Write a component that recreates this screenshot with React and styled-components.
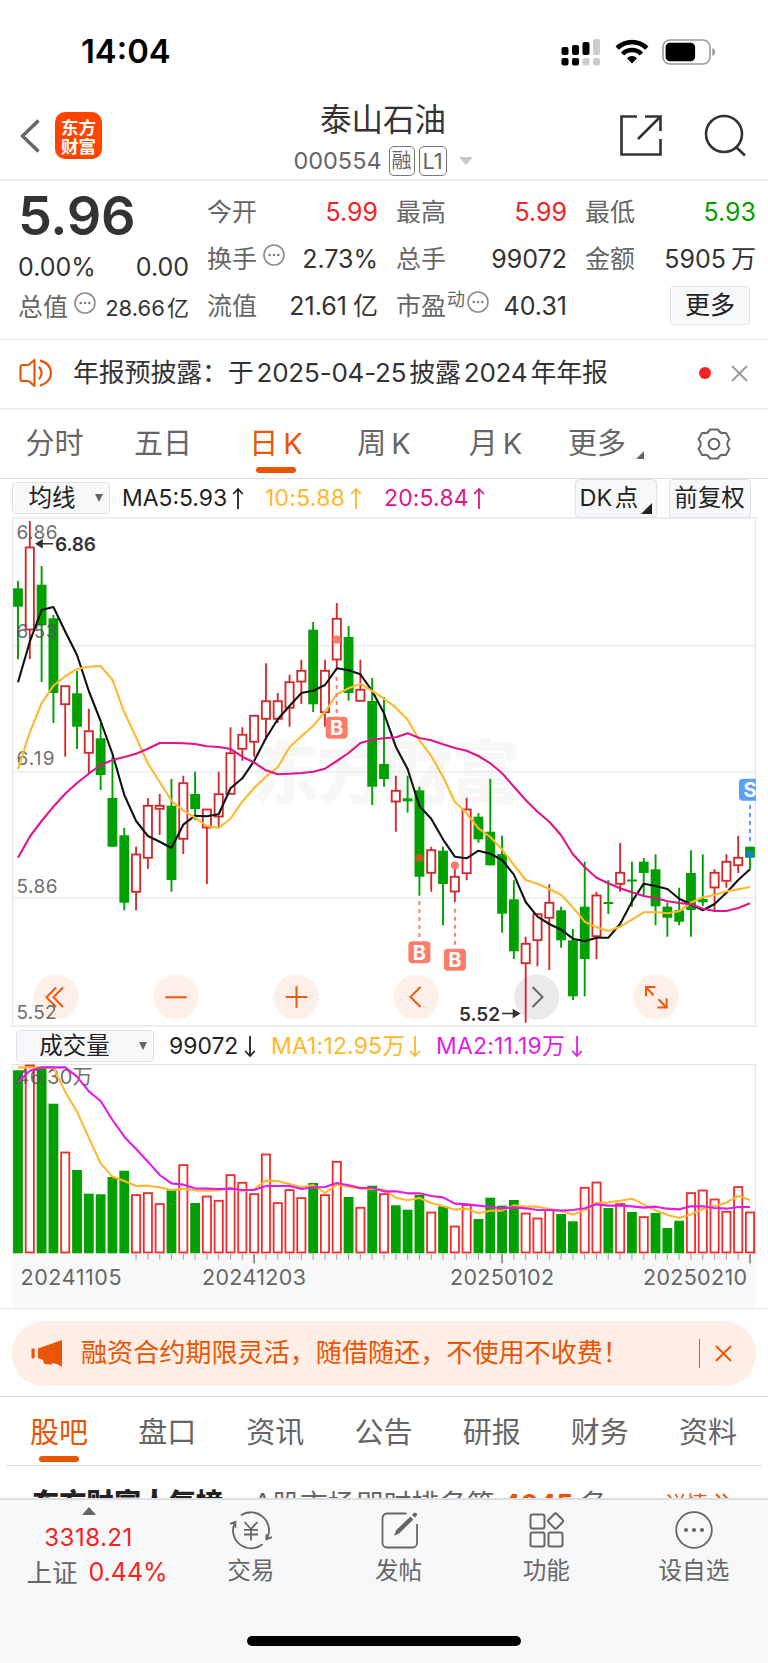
import React from "react";
import styled, { createGlobalStyle } from "styled-components";

const FONT = `Inter, "Noto Sans CJK SC", "Liberation Sans", sans-serif`;

const C = {
  orange: "#ea5504",
  red: "#f62222",
  green: "#00a000",
  text: "#333",
  sub: "#666",
  line: "#e6e6e8",
  panel: "#f7f8fa",
  black: "#111",
  yellow: "#ffb72c",
  pink: "#e0148c",
  purple: "#e21be6",
};

const GlobalStyle = createGlobalStyle`
  body { margin: 0; background: #fff; }
  * { box-sizing: border-box; }
`;

const Screen = styled.main`
  width: 768px;
  height: 1663px;
  overflow: hidden;
  display: flex;
  flex-direction: column;
  background: #fff;
  color: ${C.text};
  font-family: ${FONT};
  font-weight: 400;
  white-space: nowrap;
`;

const Text = styled.span`
  font-size: ${(p) => p.$size || 25}px;
  font-weight: ${(p) => p.$weight || 400};
  letter-spacing: ${(p) => p.$ls || 0}px;
  word-spacing: ${(p) => p.$ws || 0}px;
  color: ${(p) => p.$color || "inherit"};
  line-height: 1;
`;

/* ---------- status bar ---------- */

const StatusBar = styled.div`
  height: 90px;
  padding: 13px 52px 0 81px;
  display: flex;
  align-items: center;
  justify-content: space-between;
  color: #000;
`;

const StatusIcons = styled.div`
  display: flex;
  align-items: center;
  gap: 13.5px;
`;

/* ---------- title bar ---------- */

const TitleBar = styled.header`
  height: 91px;
  padding: 0 21px 0 19px;
  display: grid;
  grid-template-columns: 240px 1fr 240px;
  border-bottom: 2px solid #ececee;
`;

const TitleSide = styled.div`
  display: flex;
  align-items: center;
  padding-top: ${(p) => (p.$end ? 3 : 2)}px;
  gap: ${(p) => p.$gap}px;
  justify-content: ${(p) => (p.$end ? "flex-end" : "flex-start")};
`;

const Logo = styled.div`
  width: 47px;
  height: 47px;
  border-radius: 10px;
  background: #ff4400;
  color: #fff;
  display: flex;
  flex-direction: column;
  align-items: center;
  justify-content: center;
  font: 700 17.5px/19px "Noto Sans CJK SC", sans-serif;
`;

const TitleCenter = styled.div`
  display: flex;
  flex-direction: column;
  align-items: center;
  padding-top: 10px;
`;

const StockName = styled.h1`
  margin: 0;
  font-size: 31.5px;
  font-weight: 400;
  line-height: 40px;
`;

const CodeLine = styled.div`
  height: 32px;
  margin-top: 5px;
  display: flex;
  align-items: center;
  gap: 4px;
  color: ${C.sub};
`;

const Badge = styled.span`
  width: ${(p) => p.$w}px;
  height: 30px;
  margin-left: ${(p) => p.$ml || 0}px;
  border: 1.5px solid #777;
  border-radius: 5px;
  display: inline-flex;
  align-items: center;
  justify-content: center;
  font-size: ${(p) => p.$size}px;
  line-height: 1;
`;

const Caret = styled.span`
  width: 0;
  height: 0;
  border: ${(p) => p.$s}px solid transparent;
  border-top: ${(p) => p.$h}px solid ${(p) => p.$color};
  border-bottom: 0;
  margin-left: ${(p) => p.$ml || 0}px;
`;

/* ---------- quote ---------- */

const Quote = styled.section`
  height: 159px;
  padding: 8px 0 0 18px;
  display: grid;
  grid-template-columns: repeat(4, 171px);
  column-gap: 18px;
  border-bottom: 1px solid ${C.line};
`;

const QuoteColumn = styled.div`
  display: flex;
  flex-direction: column;
`;

const QuoteRow = styled.div`
  height: ${(p) => p.$h || 47}px;
  display: flex;
  align-items: center;
  justify-content: ${(p) => (p.$end ? "flex-end" : "space-between")};
`;

const QuoteLabel = styled.span`
  display: inline-flex;
  align-items: center;
  font-size: 25px;
  line-height: 1;
  color: ${C.sub};
  sup {
    font-size: 18px;
    line-height: 1;
    margin: -14px 0 0 1px;
  }
  svg {
    margin: -9px 0 0 ${(p) => (p.$tight ? 2 : 6)}px;
  }
`;

const Price = styled.div`
  height: 55px;
  font-size: 54px;
  font-weight: 600;
  line-height: 54px;
  letter-spacing: -0.3px;
`;

const MoreButton = styled.button`
  width: 80px;
  height: 39px;
  margin: -2px 6px 0 0;
  padding: 0;
  border: 1.5px solid #dfe1e8;
  border-radius: 4px;
  background: ${C.panel};
  color: #222;
  font: 400 25px/1 ${FONT};
`;

/* ---------- notice ---------- */

const Notice = styled.section`
  height: 70px;
  padding: 0 20px 2px 19px;
  display: flex;
  align-items: center;
  border-bottom: 2px solid #eeeef0;
`;

const NoticeText = styled.div`
  flex: 1;
  padding-left: 20px;
  font-size: 26px;
  letter-spacing: -0.2px;
  word-spacing: -4.2px;
  line-height: 1;
`;

const RedDot = styled.span`
  width: 12px;
  height: 12px;
  border-radius: 50%;
  background: ${C.red};
  margin-right: 20px;
`;

/* ---------- tabs ---------- */

const PeriodTabs = styled.nav`
  height: 69px;
  display: grid;
  grid-template-columns: 109px 108px 118px 98px 125px 123px 1fr;
  border-bottom: 1.5px solid #dddee3;
`;

const SectionTabs = styled.nav`
  height: 69px;
  margin: 0 6px;
  padding: 0 25px 0 24px;
  display: flex;
  justify-content: space-between;
  border-bottom: 1px solid #dedee0;
`;

const Tab = styled.div`
  display: flex;
  flex-direction: column;
  align-items: center;
  padding-top: ${(p) => p.$top || 19}px;
  font-size: 29px;
  line-height: 30px;
  word-spacing: -3px;
  color: ${(p) => (p.$active ? C.orange : C.sub)};
  &::after {
    content: "";
    width: 39.5px;
    height: 6px;
    margin-top: 8px;
    border-radius: 3px;
    background: ${(p) => (p.$active ? C.orange : "transparent")};
  }
`;

const MoreTab = styled.div`
  display: flex;
  align-items: flex-start;
  padding: 19px 0 0 10px;
  font-size: 29px;
  line-height: 30px;
  color: ${C.sub};
  svg { margin: 22px 0 0 10px; }
`;

const GearTab = styled.div`
  padding: 18px 0 0 15.5px;
`;

/* ---------- indicators ---------- */

const IndicatorBar = styled.div`
  height: ${(p) => p.$h}px;
  padding: 0 17.5px 0 ${(p) => p.$pl}px;
  display: flex;
  align-items: center;
`;

const Select = styled.div`
  width: ${(p) => p.$w}px;
  height: 31.5px;
  padding: 0 6px 0 0;
  border: 1.3px solid #dfe1e8;
  border-radius: 4px;
  background: ${C.panel};
  color: #222;
  display: flex;
  align-items: center;
  span:first-child {
    flex: 1;
    text-align: center;
    font-size: 23.5px;
    line-height: 1;
    padding-right: ${(p) => p.$pad || 0}px;
  }
`;

const Readout = styled.span`
  display: inline-flex;
  align-items: center;
  width: ${(p) => p.$w}px;
  margin-left: ${(p) => p.$ml}px;
  font-size: ${(p) => p.$size}px;
  letter-spacing: ${(p) => p.$ls || 0}px;
  line-height: 1;
  color: ${(p) => p.$color};
  svg { margin-left: auto; }
`;

const ChipGroup = styled.div`
  margin-left: auto;
  display: flex;
  gap: 12px;
`;

const Chip = styled.div`
  width: 82px;
  height: 39px;
  border: 1.3px solid #dfe1e8;
  border-radius: 4px;
  background: ${C.panel};
  color: #222;
  font-size: 23.5px;
  line-height: 1;
  word-spacing: -4px;
  display: flex;
  align-items: center;
  justify-content: ${(p) => (p.$mark ? "flex-start" : "center")};
  padding-left: ${(p) => (p.$mark ? 4 : 0)}px;
  svg { margin: 20px 0 0 3px; }
`;

const Chart = styled.svg`
  display: block;
  width: 768px;
  height: ${(p) => p.$h}px;
  flex: none;
  font-family: ${FONT};
`;

const AxisStrip = styled.div`
  height: 54px;
  margin: 0 12px;
  background: ${C.panel};
`;

/* ---------- promo ---------- */

const Promo = styled.section`
  height: 89px;
  padding: 12px 12px 0;
  border-top: 1.5px solid ${C.line};
  border-bottom: 1px solid #dedee0;
`;

const PromoPill = styled.div`
  height: 65px;
  border-radius: 32px;
  padding: 0 24px 0 19px;
  background: #feeee6;
  color: ${C.orange};
  display: flex;
  align-items: center;
`;

const PromoText = styled.div`
  flex: 1;
  padding-left: 18px;
  font-size: 26.1px;
  line-height: 1;
`;

const PromoRule = styled.span`
  width: 1.3px;
  height: 29px;
  background: ${C.orange};
  margin-right: 15px;
`;

/* ---------- popularity row ---------- */

const RankRow = styled.section`
  height: 32px;
  overflow: hidden;
  padding: 23px 37px 0 32px;
  display: flex;
  align-items: flex-start;
  font-size: 27.8px;
  line-height: 30px;
  color: ${C.sub};
`;

const RankTitle = styled.b`
  font-size: 27.3px;
  font-weight: 900;
  color: #222;
  margin-right: 30px;
`;

const RankNumber = styled.b`
  font-size: 26.5px;
  color: ${C.orange};
  margin: 0 6px 0 8px;
`;

const RankMore = styled.span`
  margin-left: auto;
  display: flex;
  gap: 7px;
  font-size: 21.5px;
  color: ${C.orange};
  svg { margin-top: 4px; }
`;

/* ---------- bottom bar ---------- */

const BottomBar = styled.footer`
  height: 165px;
  border-top: 2px solid #dcdee2;
  background: #f7f8fa;
  display: flex;
  flex-direction: column;
  justify-content: space-between;
  align-items: center;
`;

const BottomItems = styled.div`
  width: 100%;
  display: grid;
  grid-template-columns: 177px repeat(4, 147.7px);
`;

const IndexBox = styled.div`
  display: flex;
  flex-direction: column;
  align-items: center;
  padding: 7px 0 0 0;
  color: ${C.red};
`;

const IndexLine = styled.div`
  display: flex;
  align-items: center;
  gap: ${(p) => p.$gap || 0}px;
  height: ${(p) => p.$h}px;
  padding-left: ${(p) => p.$pl || 0}px;
`;

const BottomItem = styled.div`
  display: flex;
  flex-direction: column;
  align-items: center;
  padding-top: 10px;
  gap: 8px;
  font-size: 23.6px;
  line-height: 25px;
  color: ${C.sub};
`;

const HomeIndicator = styled.div`
  width: 274px;
  height: 10px;
  border-radius: 5px;
  margin-bottom: 17px;
  background: #000;
`;

/* ---------- icons ---------- */

const SignalIcon = () => (
  <svg width="40" height="28" viewBox="0 0 40 28">
    <g fill="#000">
      <rect x="0.5" y="9" width="7" height="8" rx="2" />
      <rect x="11" y="7" width="7" height="10" rx="2" />
      <rect x="21.5" y="4" width="7" height="13" rx="2" />
      <rect x="0.5" y="20" width="7" height="7.5" rx="2" />
      <rect x="11" y="20" width="7" height="7.5" rx="2" />
    </g>
    <g fill="#ccc">
      <rect x="32" y="1" width="7" height="16" rx="2" />
      <rect x="21.5" y="20" width="7" height="7.5" rx="2" />
      <rect x="32" y="20" width="7" height="7.5" rx="2" />
    </g>
  </svg>
);

const WifiIcon = () => (
  <svg width="34" height="25" viewBox="0 0 34 25">
    <g fill="none" stroke="#000" strokeWidth="4.6">
      <path d="M2.2 9.2a21 21 0 0 1 29.6 0" />
      <path d="M7.6 15a13.2 13.2 0 0 1 18.8 0" />
    </g>
    <path d="M17 24.4l-5-5.2a7 7 0 0 1 10 0z" />
  </svg>
);

const BatteryIcon = () => (
  <svg width="54" height="26" viewBox="0 0 54 26">
    <rect x="1" y="1" width="47" height="24" rx="7" fill="none" stroke="#9a9a9a" strokeWidth="1.6" />
    <rect x="3.6" y="3.8" width="29.5" height="18.4" rx="4.5" />
    <path d="M50.3 9v8c1.8-.7 2.8-2.2 2.8-4s-1-3.3-2.8-4z" fill="#9a9a9a" />
  </svg>
);

const BackIcon = () => (
  <svg width="23" height="36" viewBox="0 0 23 36" fill="none" stroke="#666" strokeWidth="3.4">
    <path d="M19.5 2.5L3.5 18l16 15.500" />
  </svg>
);

const ShareIcon = () => (
  <svg width="44" height="44" viewBox="0 0 44 44" fill="none" stroke="#333" strokeWidth="2.6">
    <path d="M18 2.500H2.500v38h39V25" />
    <path d="M26 2.500h15.500V17M41.500 2.500L19 25" />
  </svg>
);

const SearchIcon = () => (
  <svg width="43" height="44" viewBox="0 0 43 44" fill="none" stroke="#333" strokeWidth="2.6">
    <circle cx="20" cy="20" r="18" />
    <path d="M32 33l9 8.500" />
  </svg>
);

const DotsIcon = () => (
  <svg width="22" height="22" viewBox="0 0 22 22">
    <circle cx="11" cy="11" r="10" fill="none" stroke="#8c8c8c" strokeWidth="1.6" />
    <g fill="#808080">
      <circle cx="6.700" cy="11" r="1.300" />
      <circle cx="11" cy="11" r="1.300" />
      <circle cx="15.300" cy="11" r="1.300" />
    </g>
  </svg>
);

const SpeakerIcon = () => (
  <svg width="34" height="30" viewBox="0 0 34 30" fill="none" stroke={C.orange} strokeWidth="2.2">
    <path d="M15.500 2v26l-6-5H3.500q-2 0-2-2V9q0-2 2-2h6z" strokeLinejoin="round" />
    <path d="M20 8.800q5.400 6.200 0 12.400M21 2.400q11 3.600 11 12.600t-11 12.600" />
  </svg>
);

const CloseIcon = ({ color, w = 1.8 }) => (
  <svg width="17" height="17" viewBox="0 0 17 17" fill="none" stroke={color} strokeWidth={w}>
    <path d="M1 1l15 15M16 1L1 16" />
  </svg>
);

const GearIcon = () => (
  <svg width="34" height="32" viewBox="0 0 34 32" fill="none" stroke="#666" strokeWidth="2">
    <path
      d="M13 1.500h8q2 4.100 5.400 3.600h2.500l3.600 6.200q-2.300 2.300-2.300 4.700t2.300 4.700l-3.600 6.200h-2.500q-3.400-.5-5.400 3.600h-8q-2-4.100-5.400-3.600H5.100l-3.600-6.200Q3.800 18.400 3.800 16t-2.300-4.700l3.600-6.200h2.500Q11 5.600 13 1.500z"
      strokeLinejoin="round"
    />
    <circle cx="17" cy="16" r="5.300" />
  </svg>
);

const CornerMark = ({ size, color }) => (
  <svg width={size} height={size} viewBox="0 0 10 10">
    <path d="M10 0v10H0z" fill={color} />
  </svg>
);

const TrendArrow = ({ down, color }) => (
  <svg width="12" height="23" viewBox="0 0 12 23" fill="none" stroke={color} strokeWidth="1.8">
    <path d={down ? "M6 1v20M1.200 16l4.800 5 4.800-5" : "M6 22V2M1.200 7L6 2l4.800 5"} />
  </svg>
);

const DoubleChevron = () => (
  <svg width="16" height="16" viewBox="0 0 16 16" fill="none" stroke={C.orange} strokeWidth="2">
    <path d="M1 1l6.500 7L1 15M8 1l6.500 7L8 15" />
  </svg>
);

const MegaphoneIcon = () => (
  <svg width="32" height="27" viewBox="0 0 32 27" fill={C.orange}>
    <path d="M31 0v27l-4-2.600-5.500-1.600c-1 2.800-2.600 2-4 1.200-2.500 1-5.200-.5-5.200-2.600V20L7 18.300V8.600z" />
    <rect x="0.500" y="8.600" width="3.200" height="9.700" />
  </svg>
);

const TradeIcon = () => (
  <svg width="44" height="40" viewBox="0 0 44 40" fill="none" stroke="#666" strokeWidth="1.800">
    <path d="M12 5.300A18 18 0 0 1 38 28.500l-.5 1.400M33.500 34.200A18 18 0 0 1 5.600 13" />
    <path d="M1 13.800l5.400-2v6M43 27.200l-5.600 2v-5" />
    <path d="M15.500 12l6.500 7 6.500-7M15 19.800h14M15 24.500h14M22 19v11.500" />
  </svg>
);

const PostIcon = () => (
  <svg width="40" height="40" viewBox="0 0 40 40" fill="none" stroke="#666" strokeWidth="1.800">
    <path d="M27.500 3.500H8a4.500 4.500 0 0 0-4.500 4.500v25A4.500 4.500 0 0 0 8 37.500h25.500A4.500 4.500 0 0 0 38 33V14" />
    <path d="M15.200 25.800l2-5.600L31.400 6.400l3 3-14 13.800z" fill="#666" stroke="none" />
    <path d="M33 4.800l2.200-2q1.700-.5 2.600.8.900 1.200-.2 2.200L35.800 7.800z" fill="#666" stroke="none" />
  </svg>
);

const GridIcon = () => (
  <svg width="40" height="40" viewBox="0 0 40 40" fill="none" stroke="#666" strokeWidth="2">
    <rect x="4.500" y="4.500" width="14" height="14" rx="2" />
    <rect x="4.500" y="22.500" width="14" height="14" rx="2" />
    <rect x="22.500" y="22.500" width="14" height="14" rx="2" />
    <rect x="23.800" y="5.200" width="11.600" height="11.600" rx="1.800" transform="rotate(45 29.600 11)" />
  </svg>
);

const MoreDotsIcon = () => (
  <svg width="40" height="40" viewBox="0 0 40 40">
    <circle cx="20" cy="20" r="17.800" fill="none" stroke="#666" strokeWidth="1.800" />
    <g fill="#666">
      <circle cx="12" cy="20" r="2.100" />
      <circle cx="20" cy="20" r="2.100" />
      <circle cx="28" cy="20" r="2.100" />
    </g>
  </svg>
);

/* ---------- chart data ---------- */

const STEP = 732 / 62;
const xAt = (i) => 18 + i * STEP;

// kind, high, body top, body bottom, low
const candles = [
  ["g", 581, 588.3, 606.7, 659.3], ["r", 521, 547, 630, 659], ["g", 566, 584.7, 625.3, 682],
  ["g", 615, 618.3, 693, 723], ["r", 685.7, 685.7, 704.7, 756.7], ["g", 671, 693.3, 726.7, 749],
  ["r", 708.7, 730.7, 753.3, 774], ["g", 723, 738.3, 775, 790], ["g", 756.7, 798, 846.7, 846.7],
  ["g", 828, 835.3, 902.7, 910.3], ["r", 846.7, 854, 892.3, 910.3], ["r", 798, 805.3, 858.3, 869],
  ["r", 794, 805.3, 809.3, 835], ["g", 779, 805.7, 880, 891.7], ["r", 775.7, 782.7, 839.3, 854],
  ["g", 771.7, 794, 809, 820], ["r", 809, 809, 828, 884], ["r", 771.7, 793.7, 817, 827.7],
  ["r", 727.3, 752.7, 794.3, 794.3], ["r", 727.3, 734.3, 749.3, 760.7], ["r", 715.3, 715.3, 742.3, 756.7],
  ["r", 663.3, 700.7, 719.3, 738], ["r", 693, 700.7, 719.3, 723], ["r", 674.7, 681.7, 708.3, 726.7],
  ["r", 659.7, 670.3, 682, 704], ["g", 622, 629.7, 704.3, 712], ["r", 659.7, 670.3, 712.7, 726.7],
  ["r", 603, 618.3, 660, 668], ["g", 626, 637, 693, 700.7], ["r", 659.7, 689.3, 701.3, 701.3],
  ["g", 678, 701, 786.7, 805], ["g", 697, 764, 779, 786.7], ["r", 775.7, 790.3, 802, 831.7],
  ["g", 775.7, 798.3, 801.3, 812.7], ["g", 786.7, 790.3, 876.7, 895.7], ["r", 846.7, 849.7, 873.3, 891.7],
  ["g", 846.7, 850.7, 884, 925.3], ["r", 867, 876.3, 892, 902.3], ["r", 797.7, 809, 873.7, 880.3],
  ["g", 813, 816.7, 839.3, 842.7], ["g", 779, 831.7, 865.3, 865.3], ["g", 835.7, 854, 913.7, 932.7],
  ["g", 880.3, 899.3, 951.3, 959], ["r", 936.7, 943.3, 963.7, 1022.7], ["r", 913.7, 913.7, 940.7, 966.3],
  ["r", 884.3, 902.3, 918.3, 970], ["g", 906.7, 910.3, 940.3, 947.7], ["g", 929, 940.3, 996.3, 1000],
  ["g", 861.7, 906.7, 959, 996.3], ["r", 891.7, 895, 936.7, 959], ["g", 880.3, 902, 904, 914],
  ["r", 843, 872.3, 884.3, 891.7], ["g", 861.7, 879.5, 881.5, 906.7], ["g", 858, 861.7, 873, 895.3],
  ["g", 854.3, 869.3, 906.3, 925.3], ["g", 902.7, 906.7, 917.7, 936.7], ["g", 887.7, 910.3, 921.7, 925.3],
  ["g", 850.3, 873, 910, 936.7], ["g", 854.3, 899, 902.3, 906], ["r", 869.3, 872.3, 888, 910.7],
  ["r", 854.3, 861.3, 881.3, 887.7], ["r", 835.7, 857.3, 865.7, 873], ["g", 846.7, 846.7, 857.7, 869.3],
];

const ma5 = [
  682.3, 641.7, 610, 607, 631.5, 655, 691, 721, 754, 795, 821, 836, 841.7, 848, 824.7, 815.7, 816.3, 814.3,
  788.3, 778.3, 761, 738.3, 719.3, 706, 693, 690.7, 685, 668.3, 670.3, 674.3, 691, 713.3, 746.7, 769, 806,
  818.7, 839.3, 856.7, 858.3, 850.7, 853.7, 860, 874.7, 902, 916.7, 924, 929.7, 938.7, 941.3, 937.7, 937.7,
  924, 901.7, 883.7, 886, 889, 898.7, 904.3, 910.3, 904, 892.7, 880, 869.3,
];
const ma10 = [
  769.3, 732.3, 703.3, 685.7, 676.3, 669, 666.7, 666, 680, 712.3, 737.3, 763.5, 782, 800.7, 810.7, 817.7,
  826, 828, 818.7, 801.7, 788, 776.7, 767.3, 747.3, 736.3, 725.7, 712, 694.3, 688.3, 683.7, 691, 698.7,
  707.7, 719.7, 740.3, 756, 776.7, 801.7, 813.3, 828.3, 837, 849.5, 865, 880, 883.7, 889, 894.7, 907.3,
  921.7, 927.3, 931, 926.7, 919.7, 912.3, 912, 913.3, 911.3, 902.7, 897.3, 895, 891.3, 889.3, 887,
];
const ma20 = [
  857.7, 836.7, 821, 806.7, 793.7, 783, 773.7, 765, 760, 757, 753.7, 748.7, 743, 743, 743.3, 744, 746.3,
  747, 749, 756.7, 762.5, 770.3, 774.3, 773.7, 773, 771.7, 768.7, 761, 753, 743, 739.7, 738.3, 737.3, 733.3,
  738, 740.3, 744.3, 748, 750.7, 756, 763.3, 773.3, 786.7, 800, 811.7, 821.7, 835.3, 854.3, 867.3, 877.7,
  883.3, 888.3, 892.3, 896, 898, 901.3, 903, 904.3, 908.7, 911, 911, 908, 903.3,
];

// bar heights measured up from the volume baseline
const volumes = [
  183, 187.6, 186, 149.6, 100.6, 83.3, 59.6, 59, 76.3, 82.6, 58, 60, 49, 63, 88, 50.3, 56.6, 52.3, 78, 70.3,
  59, 98.6, 50, 63, 55, 70.3, 58, 91.3, 56.3, 45.3, 67.6, 59, 48, 43.6, 58.3, 40.6, 47, 26.6, 48, 34.3, 55.6,
  47.6, 53.3, 39.6, 34.6, 43.3, 39.3, 32, 65.3, 70.6, 45.3, 49, 41.3, 36, 40.3, 25.3, 32.6, 60, 62.6, 53.6,
  41.3, 66, 40.6,
];
// G = falling, R = rising
const volumeKinds =
  "GRGGRGGGGGRRRGRGRRRRRRRRRGRRGRGRGGGRGRRGGGGRRRGGRRGRGRGGGRRRRRR".split("");

const thirds = (list) => list.map((v) => 1020 + v / 3);
const volMa1 = thirds([
  142, 142, 142, 142, 215, 275, 353, 430, 470, 483, 498, 497, 502, 510, 506, 511, 512, 511, 503, 513, 508, 482,
  483, 492, 502, 495, 519, 494, 500, 506, 507, 509, 533, 541, 534, 549, 558, 569, 566, 580, 572, 572, 556, 560,
  560, 567, 572, 584, 570, 549, 547, 542, 536, 553, 571, 585, 594, 583, 567, 558, 548, 528, 540,
]);
const volMa2 = thirds([
  187, 152, 142, 142, 142, 170, 214, 243, 300, 350, 387, 425, 465, 490, 494, 505, 506, 507, 506, 510, 510, 498,
  498, 498, 507, 502, 501, 489, 496, 504, 504, 514, 514, 520, 520, 528, 532, 551, 553, 557, 561, 565, 562, 565,
  570, 570, 572, 570, 565, 553, 557, 557, 559, 563, 560, 566, 568, 559, 559, 564, 566, 561, 561,
]);

const Line = ({ data, color }) => (
  <polyline
    points={data.map((y, i) => `${xAt(i).toFixed(1)},${y}`).join(" ")}
    fill="none"
    stroke={color}
    strokeWidth="2.1"
    strokeLinejoin="round"
  />
);

const Candle = ({ i, d: [kind, high, top, bottom, low] }) => {
  const x = xAt(i);
  if (kind === "g") {
    return (
      <g fill={C.green}>
        <rect x={x - 0.95} y={high} width="1.9" height={low - high} />
        <rect x={x - 4.9} y={top} width="9.800" height={bottom - top} />
      </g>
    );
  }
  return (
    <g stroke="#d2292d" strokeWidth="1.850" fill="none">
      <path d={`M${x} ${high}V${top}M${x} ${bottom}V${low}`} />
      <rect x={x - 4.1} y={top + 0.5} width="8.200" height={Math.max(bottom - top - 1, 2)} />
    </g>
  );
};

const TradeMark = ({ x, dot, from, to, box, letter, color, dotColor }) => (
  <g>
    <circle cx={x} cy={dot} r="4.100" fill={dotColor || color} />
    <line x1={x} x2={x} y1={from} y2={to} stroke={color} strokeWidth="2" strokeDasharray="4 4" />
    <rect x={x - 11} y={box - 11} width="22" height="22" rx="4" fill={color} />
    <text x={x} y={box + 7.2} textAnchor="middle" fontSize="20" fontWeight="700" fill="#fff">
      {letter}
    </text>
  </g>
);

const controlCenters = [56.3, 176, 296.3, 416.3, 536.7, 656.3];

const PriceChart = () => (
  <Chart $h={511} viewBox="0 517 768 511">
    <defs>
      <clipPath id="plot">
        <rect x="12" y="517" width="744" height="510" />
      </clipPath>
    </defs>
    <rect x="12.500" y="518" width="743" height="508" fill="none" stroke="#e4e5ea" strokeWidth="1.300" />
    <text x="251" y="798" fontSize="69" textLength="269" fontWeight="900" fill="#f7f7f7">东方财富</text>
    {[645.7, 771.7, 898].map((y) => (
      <line key={y} x1="12" x2="755.500" y1={y} y2={y} stroke="#e8ebf2" strokeWidth="1.600" />
    ))}
    {controlCenters.map((x, i) => (
      <circle key={x} cx={x} cy="997" r="22.600" fill={i === 4 ? "#eaeaea" : "#fef0e8"} />
    ))}
    <g fill="none" stroke="#f0570e" strokeWidth="2">
      <path d="M56 987.500l-9.500 9.800L56 1007M63 987.500l-9.500 9.800 9.500 9.700" />
      <path d="M165.300 997.300h21.500M285.700 997h21.600M296.500 986.200v21.600" />
      <path d="M420.500 987l-10 10 10 10" />
      <path d="M653.500 995.300l-7.500-8M655.300 987h-9.300v9.300M658.500 999.300l7.500 7.700M657.300 1007.500h9.300v-9.300" />
    </g>
    <path d="M532.500 987l10 10-10 10" fill="none" stroke="#666" strokeWidth="2" />
    <g clipPath="url(#plot)">
      {candles.map((d, i) => (
        <Candle key={i} i={i} d={d} />
      ))}
      <g fontSize="19" fill="#555" opacity="0.85">
        <text x="16.500" y="539" textLength="41">6.86</text>
        <text x="16.500" y="638.300" textLength="41">6.53</text>
        <text x="16.500" y="765" textLength="38">6.19</text>
        <text x="16.500" y="892.700" textLength="41">5.86</text>
        <text x="16.500" y="1018.700" textLength="40">5.52</text>
      </g>
      <Line data={ma5} color={C.black} />
      <Line data={ma10} color={C.yellow} />
      <Line data={ma20} color={C.pink} />
      <TradeMark x={336.7} dot={639.7} from={677} to={713} box={727.7} letter="B" color="#fd7c6c" />
      <TradeMark x={419.4} dot={858} from={901} to={938} box={952.3} letter="B" color="#fd7c6c" dotColor="#b8601c" />
      <TradeMark x={454.9} dot={865.5} from={908.7} to={946} box={959.7} letter="B" color="#fd7c6c" />
      <TradeMark x={750} dot={854} from={805} to={843} box={789.7} letter="S" color="#5b9ffb" dotColor="#1484b8" />
    </g>
    <g fontSize="19" fontWeight="600" fill="#333">
      <text x="55" y="550.700" textLength="41">6.86</text>
      <text x="459" y="1020.700" textLength="41">5.52</text>
    </g>
    <g stroke="#333" strokeWidth="1.600" fill="#333">
      <path d="M53 543.800H38M42 540.500v6.600l-5.500-3.300zM502 1013.500h13M513.500 1010.200v6.600l5.500-3.300z" />
    </g>
  </Chart>
);

const BASE = 1253.3;

const VolumeChart = () => (
  <Chart $h={190} viewBox="0 1064 768 190">
    <path d="M12.500 1254V1064.700H755.500V1254" fill="none" stroke="#e4e5ea" strokeWidth="1.300" />
    {volumes.map((h, i) =>
      volumeKinds[i] === "G" ? (
        <rect key={i} x={xAt(i) - 4.9} y={BASE - h} width="9.800" height={h} fill={C.green} />
      ) : (
        <rect
          key={i}
          x={xAt(i) - 4.1}
          y={BASE - h - 0.2}
          width="8.200"
          height={h - 0.6}
          fill="#fff"
          stroke="#f52a2a"
          strokeWidth="1.800"
        />
      )
    )}
    <text x="16.500" y="1084" fontSize="20" textLength="76" fill="#555" opacity="0.850">46.30万</text>
    <Line data={volMa1} color={C.yellow} />
    <Line data={volMa2} color={C.purple} />
  </Chart>
);

const TimeAxis = () => (
  <AxisStrip>
    <Chart as="svg" $h={54} viewBox="12 1254 768 54">
      {candles.map((_, i) => {
        if (i < 10) return null;
        const major = i === 20 || i === 41 || i === 62;
        return (
          <line
            key={i}
            x1={xAt(i)}
            x2={xAt(i)}
            y1="1254"
            y2={major ? 1263.5 : 1259.5}
            stroke={major ? "#888" : "#a8a8ab"}
            strokeWidth={major ? 1.7 : 1.2}
          />
        );
      })}
      <g fontSize="21.500" fill="#666">
        <text x="20.500" y="1285" textLength="101">20241105</text>
        <text x="202" y="1285" textLength="104">20241203</text>
        <text x="450" y="1285" textLength="104">20250102</text>
        <text x="643" y="1285" textLength="104">20250210</text>
      </g>
    </Chart>
  </AxisStrip>
);

/* ---------- page ---------- */

const sectionTabs = ["股吧", "盘口", "资讯", "公告", "研报", "财务", "资料"];

const bottomItems = [
  ["交易", TradeIcon],
  ["发帖", PostIcon],
  ["功能", GridIcon],
  ["设自选", MoreDotsIcon],
];

export default function App() {
  return (
    <>
      <GlobalStyle />
      <Screen>
        <StatusBar>
          <Text $size={32.8} $weight={600}>14:04</Text>
          <StatusIcons>
            <SignalIcon />
            <WifiIcon />
            <BatteryIcon />
          </StatusIcons>
        </StatusBar>

        <TitleBar>
          <TitleSide $gap={13}>
            <BackIcon />
            <Logo>
              <span>东方</span>
              <span>财富</span>
            </Logo>
          </TitleSide>
          <TitleCenter>
            <StockName>泰山石油</StockName>
            <CodeLine>
              <Text $size={23.5}>000554</Text>
              <Badge $w={26} $size={20} $ml={3}>融</Badge>
              <Badge $w={28} $size={22}>L1</Badge>
              <Caret $s={7} $h={8} $color="#c8c8c8" $ml={8} />
            </CodeLine>
          </TitleCenter>
          <TitleSide $gap={41} $end>
            <ShareIcon />
            <SearchIcon />
          </TitleSide>
        </TitleBar>

        <Quote>
          <QuoteColumn>
            <Price>5.96</Price>
            <QuoteRow $h={47}>
              <Text>0.00%</Text>
              <Text>0.00</Text>
            </QuoteRow>
            <QuoteRow $h={33}>
              <QuoteLabel>总值<DotsIcon /></QuoteLabel>
              <Text $size={22} $ws={-4}>28.66 亿</Text>
            </QuoteRow>
          </QuoteColumn>
          <QuoteColumn>
            <QuoteRow>
              <QuoteLabel>今开</QuoteLabel>
              <Text $color={C.red}>5.99</Text>
            </QuoteRow>
            <QuoteRow>
              <QuoteLabel>换手<DotsIcon /></QuoteLabel>
              <Text>2.73%</Text>
            </QuoteRow>
            <QuoteRow>
              <QuoteLabel>流值</QuoteLabel>
              <Text $ws={-1}>21.61 亿</Text>
            </QuoteRow>
          </QuoteColumn>
          <QuoteColumn>
            <QuoteRow>
              <QuoteLabel>最高</QuoteLabel>
              <Text $color={C.red}>5.99</Text>
            </QuoteRow>
            <QuoteRow>
              <QuoteLabel>总手</QuoteLabel>
              <Text>99072</Text>
            </QuoteRow>
            <QuoteRow>
              <QuoteLabel $tight>市盈<sup>动</sup><DotsIcon /></QuoteLabel>
              <Text>40.31</Text>
            </QuoteRow>
          </QuoteColumn>
          <QuoteColumn>
            <QuoteRow>
              <QuoteLabel>最低</QuoteLabel>
              <Text $color={C.green}>5.93</Text>
            </QuoteRow>
            <QuoteRow>
              <QuoteLabel>金额</QuoteLabel>
              <Text $ws={-2}>5905 万</Text>
            </QuoteRow>
            <QuoteRow $end>
              <MoreButton>更多</MoreButton>
            </QuoteRow>
          </QuoteColumn>
        </Quote>

        <Notice>
          <SpeakerIcon />
          <NoticeText>年报预披露：于 2025-04-25 披露 2024 年年报</NoticeText>
          <RedDot />
          <CloseIcon color="#999" />
        </Notice>

        <PeriodTabs>
          <Tab>分时</Tab>
          <Tab>五日</Tab>
          <Tab $active>日 K</Tab>
          <Tab>周 K</Tab>
          <Tab>月 K</Tab>
          <MoreTab>更多<CornerMark size={8} color="#666" /></MoreTab>
          <GearTab>
            <GearIcon />
          </GearTab>
        </PeriodTabs>

        <IndicatorBar $h={38} $pl={12}>
          <Select $w={98} $pad={4}>
            <span>均线</span>
            <Caret $s={4.7} $h={8} $color="#666" />
          </Select>
          <Readout $w={122} $ml={12} $size={22.9} $color="#222">MA5:5.93<TrendArrow color="#222" /></Readout>
          <Readout $w={97} $ml={21} $size={22.9} $ls={0.3} $color={C.yellow}>10:5.88<TrendArrow color={C.yellow} /></Readout>
          <Readout $w={101} $ml={22} $size={22.9} $ls={0.2} $color={C.pink}>20:5.84<TrendArrow color={C.pink} /></Readout>
          <ChipGroup>
            <Chip $mark>DK 点<CornerMark size={11} color="#222" /></Chip>
            <Chip>前复权</Chip>
          </ChipGroup>
        </IndicatorBar>
        <PriceChart />
        <IndicatorBar $h={36} $pl={16}>
          <Select $w={138} $pad={7}>
            <span>成交量</span>
            <Caret $s={4.7} $h={8} $color="#666" />
          </Select>
          <Readout $w={87} $ml={15} $size={22.9} $color="#222">99072<TrendArrow down color="#222" /></Readout>
          <Readout $w={150} $ml={15} $size={22.9} $ls={0.2} $color={C.yellow}>MA1:12.95万<TrendArrow down color={C.yellow} /></Readout>
          <Readout $w={147} $ml={15} $size={22.9} $ls={0.25} $color={C.purple}>MA2:11.19万<TrendArrow down color={C.purple} /></Readout>
        </IndicatorBar>
        <VolumeChart />
        <TimeAxis />

        <Promo>
          <PromoPill>
            <MegaphoneIcon />
            <PromoText>融资合约期限灵活，随借随还，不使用不收费！</PromoText>
            <PromoRule />
            <CloseIcon color={C.orange} />
          </PromoPill>
        </Promo>

        <SectionTabs>
          {sectionTabs.map((t, i) => (
            <Tab key={t} $active={i === 0} $top={21}>{t}</Tab>
          ))}
        </SectionTabs>

        <RankRow>
          <RankTitle>东方财富人气榜</RankTitle>
          <span>A股市场即时排名第</span>
          <RankNumber>4045</RankNumber>
          <span>名</span>
          <RankMore>详情<DoubleChevron /></RankMore>
        </RankRow>

        <BottomBar>
          <BottomItems>
            <IndexBox>
              <svg width="14" height="8" viewBox="0 0 14 8"><path d="M7 0l7 8H0z" fill="#666" /></svg>
              <IndexLine $h={45}><Text $size={24} $ls={0.5}>3318.21</Text></IndexLine>
              <IndexLine $h={25} $gap={11} $pl={17}>
                <Text $size={25.5} $color={C.sub}>上证</Text>
                <Text $size={25}>0.44%</Text>
              </IndexLine>
            </IndexBox>
            {bottomItems.map(([label, Icon]) => (
              <BottomItem key={label}>
                <Icon />
                <span>{label}</span>
              </BottomItem>
            ))}
          </BottomItems>
          <HomeIndicator />
        </BottomBar>
      </Screen>
    </>
  );
}
